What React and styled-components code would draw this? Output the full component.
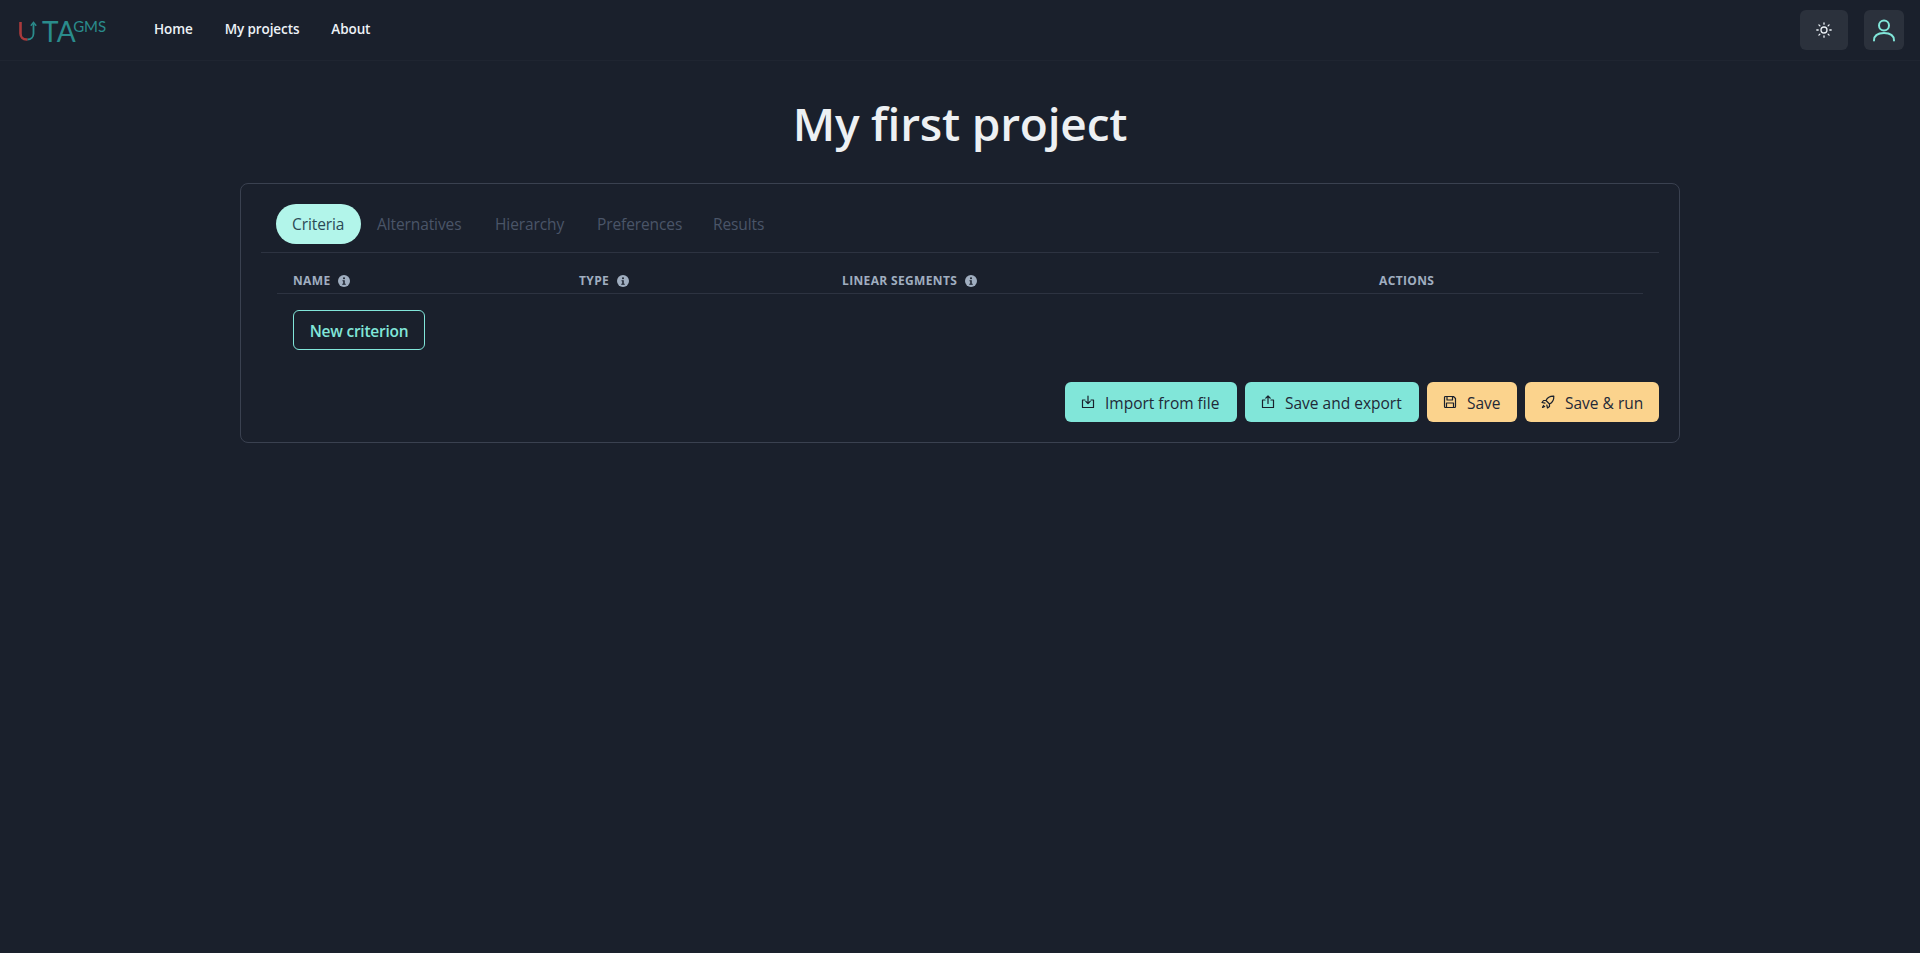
import React from "react";
import styled, { createGlobalStyle } from "styled-components";

const Global = createGlobalStyle`
  html, body { margin: 0; padding: 0; background: #1a202c; }
  body { font-family: "Open Sans", "Noto Sans", sans-serif; color: rgba(255,255,255,0.92); min-height: 953px; }
  * { box-sizing: border-box; }
`;

const Nav = styled.header`
  display: flex; align-items: center; justify-content: space-between;
  height: 61px; padding: 0 16px 1px 19px;
  border-bottom: 1px solid #1f2531;
`;
const NavLeft = styled.div`display: flex; align-items: center;`;
const Logo = styled.div`
  display: flex; align-items: flex-start; width: 135px; height: 24px;
  color: #2a8c8c; font-family: "Lato", sans-serif; line-height: 1;
`;
const LogoMark = styled.svg`width: 18px; height: 20px; margin: 3px 5px 0 0; flex: none;`;
const LogoTA = styled.span`font-size: 28px; margin-top: -1px; letter-spacing: 0.3px;`;
const LogoSup = styled.span`font-size: 15px; margin: 1px 0 0 -3px;`;
const NavLinks = styled.nav`display: flex; gap: 32px; margin-top: -1px;`;
const NavLink = styled.a`
  font-size: 13.5px; font-weight: 600; letter-spacing: -0.1px; color: #edf2f7; line-height: 20px;
`;
const NavRight = styled.div`display: flex; gap: 16px;`;
const IconButton = styled.button`
  display: flex; align-items: center; justify-content: center;
  width: ${p => p.$w}px; height: 40px; padding: 0; border: 0; border-radius: 6px;
  background: rgba(255,255,255,0.08); color: ${p => p.$color};
`;
const Main = styled.main`
  width: 1440px; margin: 0 auto; display: flex; flex-direction: column;
`;
const Title = styled.h1`
  margin: 0; height: 122px; padding-top: 33px; text-align: center;
  font-size: 46px; line-height: 58px; font-weight: 600; letter-spacing: -0.2px; color: #edf0f3;
`;
const Card = styled.section`
  border: 1px solid #3a4150; border-radius: 8px; padding: 20px;
`;
const TabList = styled.div`
  display: flex; padding: 0 15px 8px; border-bottom: 1px solid #2d3341;
`;
const Tab = styled.div`
  height: 40px; padding: 0 16px; border-radius: 20px; display: flex; align-items: center;
  font-size: 15.5px; letter-spacing: -0.1px; width: ${p => p.$w}px; white-space: nowrap;
  background: ${p => (p.$active ? "#b2f5ea" : "transparent")};
  color: ${p => (p.$active ? "#2b4a55" : "#4a5568")};
`;
const Panel = styled.div`padding: 16px 16px 0;`;
const HeadRow = styled.div`
  display: grid; grid-template-columns: 286px 263px 537px 1fr; height: 25px;
  border-bottom: 1px solid #2d3341;
`;
const HeadCell = styled.div`
  display: flex; align-items: center; gap: 8px; padding: 0 16px 1px;
  font-size: 12px; font-weight: 700; color: #a0aec0; letter-spacing: 0.35px; text-transform: uppercase;
`;
const InfoIcon = styled.svg`width: 12px; height: 12px; flex: none;`;
const NewButton = styled.button`
  display: block; margin: 16px 0 0 16px; width: 132px; height: 40px; padding: 1px 0 0;
  background: transparent; border: 1px solid #81e6d9; border-radius: 6px;
  color: #81e6d9; font: 600 15.5px "Open Sans", sans-serif; letter-spacing: -0.25px;
`;
const Footer = styled.div`
  display: flex; justify-content: flex-end; gap: 8px; margin-top: 32px;
`;
const ActionButton = styled.button`
  display: flex; align-items: center; gap: 10px; height: 40px; padding: 1px 16px 0;
  width: ${p => p.$w}px; border: 0; border-radius: 6px; white-space: nowrap;
  background: ${p => p.$bg}; color: #1f2937;
  font: 500 15.5px "Open Sans", sans-serif; letter-spacing: 0;
`;
const SmallIcon = styled.svg`
  width: 14px; height: 14px; flex: none; fill: none; stroke: #1a202c; margin-top: -2px;
  stroke-width: 1.2; stroke-linecap: round; stroke-linejoin: round;
`;

const Info = () => (
  <InfoIcon viewBox="0 0 24 24">
    <circle cx="12" cy="12" r="12" fill="#a0aec0" />
    <circle cx="12" cy="6.5" r="2" fill="#1a202c" />
    <path d="M9 10.500h4.500v7H15.500v2h-7v-2h2v-5H9z" fill="#1a202c" />
  </InfoIcon>
);

const heads = [["Name", true], ["Type", true], ["Linear segments", true], ["Actions", false]];

export default function App() {
  return (
    <>
      <Global />
      <Nav>
        <NavLeft>
          <Logo>
            <LogoMark viewBox="0 0 18 20">
              <path d="M1.500 1v11.500c0 3.500 2.500 6 6 6h1" fill="none" stroke="#a93a3c" strokeWidth="2.600" />
              <path d="M8.500 18.500c3.500 0 6-2.500 6-6V2.500" fill="none" stroke="#2a8c8c" strokeWidth="1.800" />
              <path d="M11.800 4.800 14.500 1.300l2.700 3.500" fill="none" stroke="#2a8c8c" strokeWidth="1.400" />
            </LogoMark>
            <LogoTA>TA</LogoTA>
            <LogoSup>GMS</LogoSup>
          </Logo>
          <NavLinks>
            <NavLink>Home</NavLink>
            <NavLink>My projects</NavLink>
            <NavLink>About</NavLink>
          </NavLinks>
        </NavLeft>
        <NavRight>
          <IconButton $w={48} $color="#edf2f7" aria-label="Toggle theme">
            <svg width="16" height="16" viewBox="0 0 16 16" fill="none" stroke="currentColor" strokeWidth="1.300" strokeLinecap="round">
              <circle cx="8" cy="8" r="3" />
              <path d="M8 .8v1.400M8 13.800v1.400M.8 8h1.400M13.800 8h1.400M2.900 2.900l1 1M12.100 12.100l1 1M2.900 13.100l1-1M12.100 3.900l1-1" />
            </svg>
          </IconButton>
          <IconButton $w={40} $color="#81e6d9" aria-label="Account">
            <svg width="24" height="24" viewBox="0 0 24 24" fill="none" stroke="currentColor" strokeWidth="2" strokeLinecap="round">
              <circle cx="12" cy="7.500" r="5" />
              <path d="M2 22.500c0-5 4-7.500 10-7.500s10 2.500 10 7.500" />
            </svg>
          </IconButton>
        </NavRight>
      </Nav>
      <Main>
        <Title>My first project</Title>
        <Card>
          <TabList>
            <Tab $active $w={85}>Criteria</Tab>
            <Tab $w={118}>Alternatives</Tab>
            <Tab $w={102}>Hierarchy</Tab>
            <Tab $w={116}>Preferences</Tab>
            <Tab>Results</Tab>
          </TabList>
          <Panel>
            <HeadRow>
              {heads.map(([label, info]) => (
                <HeadCell key={label}>
                  {label}
                  {info && <Info />}
                </HeadCell>
              ))}
            </HeadRow>
            <NewButton>New criterion</NewButton>
          </Panel>
          <Footer>
            <ActionButton $bg="#81e6d9" $w={172}>
              <SmallIcon viewBox="0 0 14 14">
                <path d="M4 5H1.500v7.500h11V5H10M7 1v7.500M4.800 6.300 7 8.500l2.200-2.200" />
              </SmallIcon>
              Import from file
            </ActionButton>
            <ActionButton $bg="#81e6d9" $w={174}>
              <SmallIcon viewBox="0 0 14 14">
                <path d="M4 5H1.500v7.500h11V5H10M7 8.500V1M4.800 3.200 7 1l2.200 2.200" />
              </SmallIcon>
              Save and export
            </ActionButton>
            <ActionButton $bg="#fbd38d" $w={90}>
              <SmallIcon viewBox="0 0 14 14">
                <path d="M1.500 2.500a1 1 0 0 1 1-1h8l2 2v8a1 1 0 0 1-1 1h-9a1 1 0 0 1-1-1zM4 1.500v3.500h5.500v-3.500M3.500 12.500v-4.500h7v4.500" />
              </SmallIcon>
              Save
            </ActionButton>
            <ActionButton $bg="#fbd38d" $w={134}>
              <SmallIcon viewBox="0 0 14 14">
                <path d="M5 5.500c1.500-3 4-4.500 7.800-4.300C13 5 11.500 7.500 8.500 9L5 5.500zM5 5.500H2.500L1 7.500l3 .7M8.500 9v2.500L6.500 13l-.7-3M2.700 10.300C2 11 1.500 12.500 1.500 12.500s1.500-.5 2.200-1.200" />
              </SmallIcon>
              Save &amp; run
            </ActionButton>
          </Footer>
        </Card>
      </Main>
    </>
  );
}
